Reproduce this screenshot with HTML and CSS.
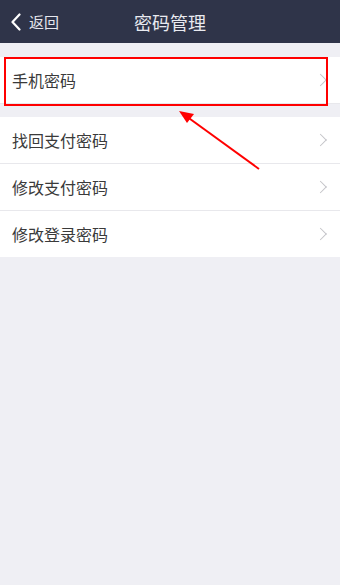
FILE: index.html
```html
<!doctype html>
<html lang="zh-CN">
<head>
    <meta charset="UTF-8" />
    <title>密码管理</title>
    <link rel="stylesheet" href="styles.css">
</head>
<body>
<div class="navbar">
    <div class="back">
        <svg class="back-icon" width="10" height="18" viewBox="0 0 10 18"><path d="M8.5 1.5 L1.5 9 L8.5 16.5" fill="none" stroke="#fff" stroke-width="2.2" stroke-linecap="round" stroke-linejoin="round"/></svg>
        <span>返回</span>
    </div>
    <div class="title">密码管理</div>
</div>
<div class="group group-first">
    <div class="row">手机密码<span class="chev"></span></div>
    <div class="highlight"></div>
</div>
<div class="group">
    <div class="row">找回支付密码<span class="chev"></span></div>
    <div class="row">修改支付密码<span class="chev"></span></div>
    <div class="row">修改登录密码<span class="chev"></span></div>
</div>
<svg class="arrow" width="340" height="585" viewBox="0 0 340 585">
    <line x1="259" y1="169" x2="186" y2="116" stroke="#f00" stroke-width="2"/>
    <polygon points="179,111 194,114 187,123" fill="#f00"/>
</svg>
</body>
</html>
```
FILE: styles.css
```css
html, body {
    margin: 0;
    padding: 0;
    height: 100%;
}
body {
    background: #efeff4;
    font-family: "Noto Sans CJK SC", "Noto Sans", sans-serif;
    position: relative;
}
.navbar {
    background: #2f3449;
    height: 43px;
    display: flex;
    align-items: center;
    justify-content: center;
    position: relative;
}
.back {
    position: absolute;
    left: 11px;
    top: 0;
    height: 43px;
    display: flex;
    align-items: center;
    gap: 8px;
    color: #e6e7ee;
    font-size: 15px;
}
.back-icon {
    display: block;
}
.title {
    color: #e9eaf0;
    font-size: 18px;
}
.group {
    background: #fff;
    margin-top: 14px;
    position: relative;
}
.group + .group {
    margin-top: 13px;
}
.row {
    height: 46px;
    display: flex;
    align-items: center;
    padding-left: 12px;
    font-size: 16px;
    color: #3a3a3a;
    position: relative;
    border-bottom: 1px solid #e8e8ec;
}
.row:last-child {
    border-bottom: none;
}
.chev {
    position: absolute;
    right: 15px;
    top: 50%;
    width: 8px;
    height: 8px;
    border-top: 1.5px solid #c4c4c8;
    border-right: 1.5px solid #c4c4c8;
    transform: translateY(-50%) rotate(45deg);
}
.highlight {
    position: absolute;
    left: 4px;
    top: 0;
    width: 320px;
    height: 45px;
    border: 2.5px solid #f00;
}
.arrow {
    position: absolute;
    left: 0;
    top: 0;
    pointer-events: none;
}
```
